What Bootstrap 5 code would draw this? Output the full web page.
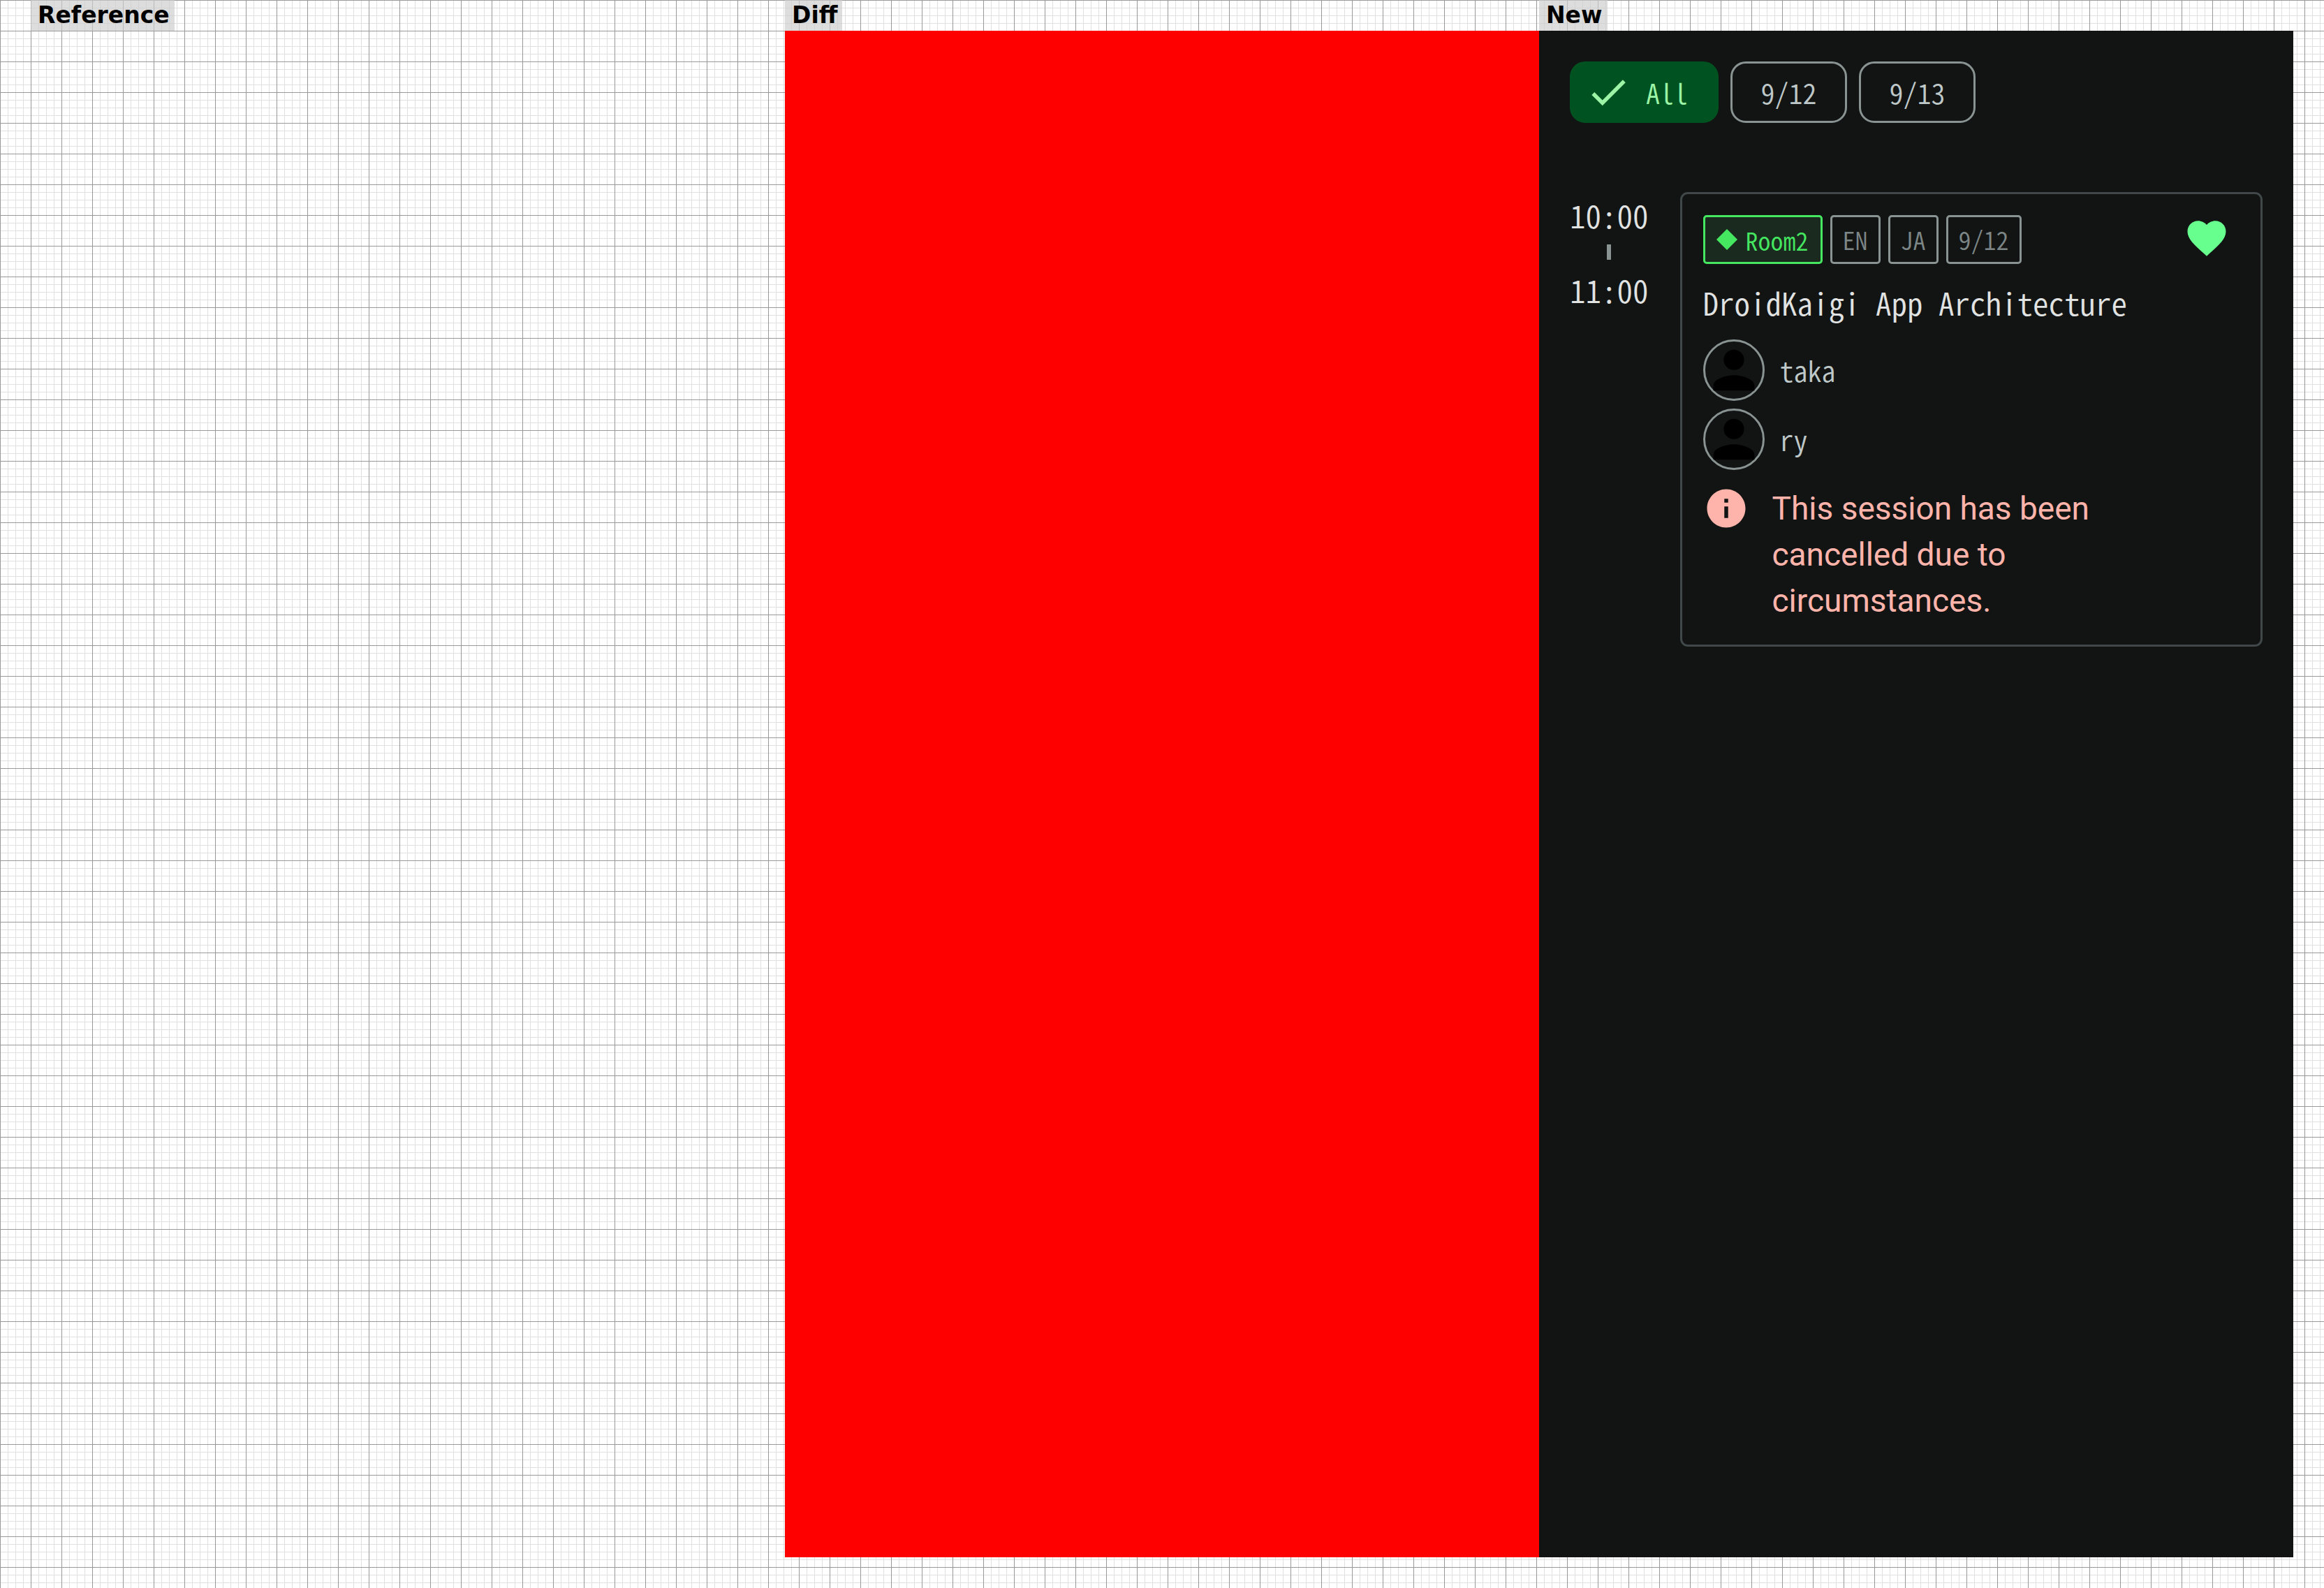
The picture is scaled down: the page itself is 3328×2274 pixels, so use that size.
<!DOCTYPE html>
<html lang="en">
<head>
<meta charset="utf-8">
<meta name="viewport" content="width=device-width, initial-scale=1">
<title>Bookmarks screenshot comparison</title>
<link href="https://cdn.jsdelivr.net/npm/bootstrap@5.3.0/dist/css/bootstrap.min.css" rel="stylesheet">
<script defer src="https://cdn.jsdelivr.net/npm/bootstrap@5.3.0/dist/js/bootstrap.bundle.min.js"></script>
<style>
  body {
    padding: 0 44px 44px;
    background-color: #fff;
    background-image:
      linear-gradient(90deg, #999 1px, transparent 1px),
      linear-gradient(#999 1px, transparent 1px),
      linear-gradient(90deg, #e0e0e0 1px, transparent 1px),
      linear-gradient(#e0e0e0 1px, transparent 1px);
    background-size: 44px 44px, 44px 44px, 11px 11px, 11px 11px;
  }
  .pane-label {
    padding: 0 7px 0 10px;
    background: rgba(204, 204, 204, .67);
    color: #000;
    font: 700 33px/44px "DejaVu Sans", sans-serif;
    height: 44px;
  }
  .pane-diff { background: #f00; }
  .pane-app {
    padding: 44px;
    background: #121413;
    color: #e1e3e2;
    font: 350 45px/66px "Noto Sans CJK JP", sans-serif;
    font-feature-settings: "hwid";
  }
  .filters { gap: 17px; margin-bottom: 99px; }
  .filter {
    display: flex;
    align-items: center;
    justify-content: center;
    height: 88px;
    min-width: 167px;
    padding: 0 40px;
    border: 3px solid #899392;
    border-radius: 22px;
    background: transparent;
    color: #bfc8c8;
    font-size: 40px;
    font-weight: inherit;
    font-feature-settings: inherit;
    line-height: 66px;
  }
  .filter.active {
    padding: 0 41px 0 19px;
    gap: 21px;
    border-color: #005320;
    background: #005320;
    color: #9cf5a6;
  }
  .slot { gap: 45px; }
  .dash { width: 6px; height: 22px; margin: 9px 0 10px; background: #899392; }
  .session {
    padding: 30px;
    border: 3px solid #404849;
    border-radius: 11px;
  }
  .tags { gap: 11px; }
  .tag {
    height: 70px;
    padding: 0 15px;
    border: 3px solid #899392;
    border-radius: 5px;
    color: #7d8686;
    font-size: 36px;
    line-height: 62px;
  }
  .tag-room {
    gap: 12px;
    padding: 0 17px 0 16px;
    border-color: #45e761;
    background: #1a2a1e;
    color: #45e761;
  }
  .fav { margin-right: 14px; padding: 0; border: 0; background: none; color: #67ff8d; line-height: 1; }
  .session-title { margin: 22px 0 20px; font-size: 45px; font-weight: inherit; line-height: 66px; }
  .speakers { gap: 11px; margin-bottom: 22px; }
  .speaker { gap: 22px; color: #bfc8c8; font-size: 40px; }
  .avatar { width: 88px; height: 88px; border: 3px solid #899392; border-radius: 50%; }
  .avatar svg { margin: -3px; color: #000; }
  .notice { gap: 33px; color: #ffb4ab; font: 400 46px/66px Roboto, sans-serif; }
  svg { display: block; flex: none; fill: currentColor; }
</style>
</head>
<body class="d-flex min-vh-100">
  <section class="d-flex flex-column align-items-start flex-fill w-100">
    <div class="pane-label">Reference</div>
  </section>

  <section class="d-flex flex-column align-items-start flex-fill w-100">
    <div class="pane-label">Diff</div>
    <div class="pane-diff flex-grow-1 w-100"></div>
  </section>

  <section class="d-flex flex-column align-items-start flex-fill w-100">
    <div class="pane-label">New</div>
    <main class="pane-app flex-grow-1 w-100">
      <div class="filters d-flex">
        <button type="button" class="filter active" aria-pressed="true">
          <svg width="66" height="66" viewBox="0 0 24 24" aria-hidden="true"><path d="M9 16.17 4.83 12l-1.42 1.41L9 19 21 7l-1.41-1.41z"/></svg>
          All
        </button>
        <button type="button" class="filter">9/12</button>
        <button type="button" class="filter">9/13</button>
      </div>

      <div class="slot d-flex align-items-start">
        <div class="d-flex flex-column align-items-center">
          <time>10:00</time>
          <span class="dash"></span>
          <time>11:00</time>
        </div>

        <article class="session flex-grow-1">
          <div class="d-flex justify-content-between align-items-start">
            <div class="tags d-flex">
              <span class="tag tag-room d-flex align-items-center">
                <svg width="30" height="30" viewBox="0 0 30 30" aria-hidden="true"><path d="M15 0 30 15 15 30 0 15z"/></svg>
                Room2
              </span>
              <span class="tag">EN</span>
              <span class="tag">JA</span>
              <span class="tag">9/12</span>
            </div>
            <button type="button" class="fav" aria-label="Remove bookmark">
              <svg width="66" height="66" viewBox="0 0 24 24" aria-hidden="true"><path d="m12 21.35-1.45-1.32C5.4 15.36 2 12.28 2 8.5 2 5.42 4.42 3 7.5 3c1.74 0 3.41.81 4.5 2.09C13.09 3.81 14.76 3 16.5 3 19.58 3 22 5.42 22 8.5c0 3.78-3.4 6.86-8.55 11.54z"/></svg>
            </button>
          </div>

          <h2 class="session-title">DroidKaigi App Architecture</h2>

          <div class="speakers d-flex flex-column">
            <div class="speaker d-flex align-items-center">
              <span class="avatar"><svg width="88" height="88" viewBox="0 0 24 24" aria-hidden="true"><path d="M12 12c2.21 0 4-1.79 4-4s-1.79-4-4-4-4 1.79-4 4 1.79 4 4 4m0 2c-2.67 0-8 1.34-8 4v2h16v-2c0-2.66-5.33-4-8-4"/></svg></span>
              <span>taka</span>
            </div>
            <div class="speaker d-flex align-items-center">
              <span class="avatar"><svg width="88" height="88" viewBox="0 0 24 24" aria-hidden="true"><path d="M12 12c2.21 0 4-1.79 4-4s-1.79-4-4-4-4 1.79-4 4 1.79 4 4 4m0 2c-2.67 0-8 1.34-8 4v2h16v-2c0-2.66-5.33-4-8-4"/></svg></span>
              <span>ry</span>
            </div>
          </div>

          <div class="notice d-flex align-items-start">
            <svg width="66" height="66" viewBox="0 0 24 24" aria-hidden="true"><path d="M12 2C6.48 2 2 6.48 2 12s4.480 10 10 10 10-4.480 10-10S17.520 2 12 2m1 15h-2v-6h2zm0-8h-2V7h2z"/></svg>
            <span>This session has been<br>cancelled due to<br>circumstances.</span>
          </div>
        </article>
      </div>
    </main>
  </section>
</body>
</html>
